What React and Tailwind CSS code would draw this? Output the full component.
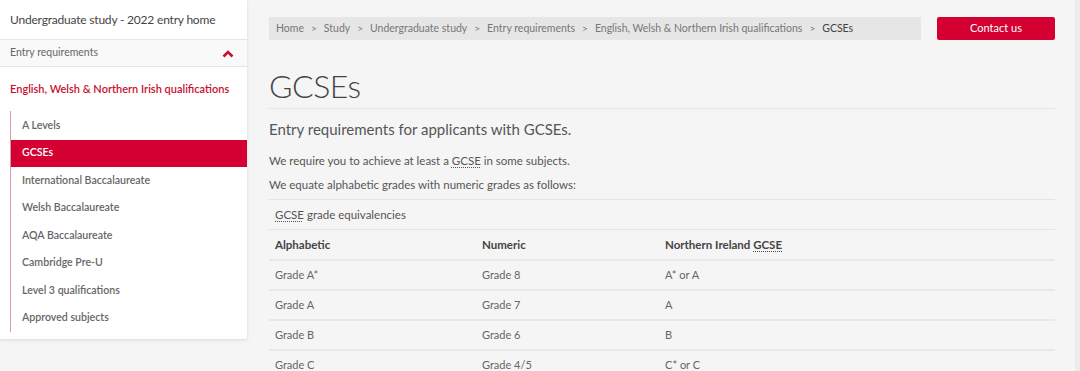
import React from 'react';

const items = [
  'A Levels',
  'GCSEs',
  'International Baccalaureate',
  'Welsh Baccalaureate',
  'AQA Baccalaureate',
  'Cambridge Pre-U',
  'Level 3 qualifications',
  'Approved subjects',
];

const rows = [
  ['Grade A*', 'Grade 8', 'A* or A'],
  ['Grade A', 'Grade 7', 'A'],
  ['Grade B', 'Grade 6', 'B'],
  ['Grade C', 'Grade 4/5', 'C* or C'],
];

const crumbs = ['Home', 'Study', 'Undergraduate study', 'Entry requirements', 'English, Welsh & Northern Irish qualifications'];

function Abbr({ children }) {
  return <span className="underline decoration-dotted decoration-1 underline-offset-2">{children}</span>;
}

export default function App() {
  return (
    <div className="h-[371px] overflow-hidden bg-[#f5f5f5] text-[#555] font-['Lato','Open_Sans',sans-serif] flex">
      {/* sidebar */}
      <aside className="w-[247px] shrink-0 self-start bg-white shadow-[0_1px_3px_rgba(0,0,0,0.12)]">
        <div className="h-[40px] flex items-center px-[10px] text-[12px] tracking-[-0.2px] whitespace-nowrap text-[#444] border-b border-[#e6e6e6]">
          Undergraduate study - 2022 entry home
        </div>
        <div className="h-[27px] flex items-center justify-between px-[10px] text-[10.5px] text-[#666] bg-[#f9f9f9] border-b border-[#e6e6e6]">
          <span>Entry requirements</span>
          <svg width="12" height="8" viewBox="0 0 12 8" className="mr-[3px] mt-[1px]">
            <path d="M1.5 6.5 L6 2 L10.5 6.5" fill="none" stroke="#c8102e" strokeWidth="2.6" />
          </svg>
        </div>
        <div className="h-[44px] pt-[1px] flex items-center px-[10px] text-[11px] whitespace-nowrap font-semibold text-[#c8102e]">
          English, Welsh &amp; Northern Irish qualifications
        </div>
        <ul className="ml-[10px] border-l border-[#d99aa8] mb-[7px] pt-[1px]">
          {items.map((it) => (
            <li
              key={it}
              className={
                'h-[27.5px] flex items-center pl-[11px] text-[10.6px] font-semibold ' +
                (it === 'GCSEs' ? 'bg-[#d50032] text-white' : 'text-[#666]')
              }
            >
              {it}
            </li>
          ))}
        </ul>
      </aside>

      {/* main */}
      <main className="flex-1 pl-[22px] pr-[20px] pt-[17px]">
        <div className="flex gap-[16px]">
          <nav className="flex-1 h-[23px] bg-[#e6e6e6] flex items-center px-[7px] text-[10.5px] whitespace-nowrap text-[#777]">
            {crumbs.map((c) => (
              <span key={c} className="flex items-center">
                <span>{c}</span>
                <span className="mx-[7px] text-[10px]">&gt;</span>
              </span>
            ))}
            <span className="text-[#444]">GCSEs</span>
          </nav>
          <button className="w-[118px] h-[23px] rounded-[2px] bg-[#d50032] text-white text-[11px]">Contact us</button>
        </div>

        <h1 className="mt-[23px] text-[32px] tracking-[-0.5px] font-light text-[#444] leading-[45px] border-b border-[#e4e4e4]">GCSEs</h1>

        <p className="mt-[10px] text-[15px] leading-[20px] text-[#555]">Entry requirements for applicants with GCSEs.</p>
        <p className="mt-[13px] text-[11.5px] leading-[18px] text-[#555]">We require you to achieve at least a <Abbr>GCSE</Abbr> in some subjects.</p>
        <p className="mt-[6px] text-[11.5px] leading-[18px] text-[#555]">We equate alphabetic grades with numeric grades as follows:</p>

        <div className="mt-[5px] border-t border-[#e4e4e4] h-[30px] flex items-center px-[6px] text-[11.5px] text-[#555]">
          <span><Abbr>GCSE</Abbr> grade equivalencies</span>
        </div>
        <div className="grid grid-cols-[207px_183px_1fr] border-t border-[#e4e4e4] h-[30px] items-center px-[6px] text-[11.5px] font-bold text-[#444]">
          <span>Alphabetic</span>
          <span>Numeric</span>
          <span>Northern Ireland <Abbr>GCSE</Abbr></span>
        </div>
        {rows.map((r) => (
          <div key={r[0]} className="grid grid-cols-[207px_183px_1fr] border-t-2 border-[#e8e8e8] h-[30px] items-center px-[6px] text-[11px] text-[#666]">
            <span>{r[0]}</span>
            <span>{r[1]}</span>
            <span>{r[2]}</span>
          </div>
        ))}
      </main>
      <div className="w-[5px] shrink-0 bg-[#ececec]" />
    </div>
  );
}
